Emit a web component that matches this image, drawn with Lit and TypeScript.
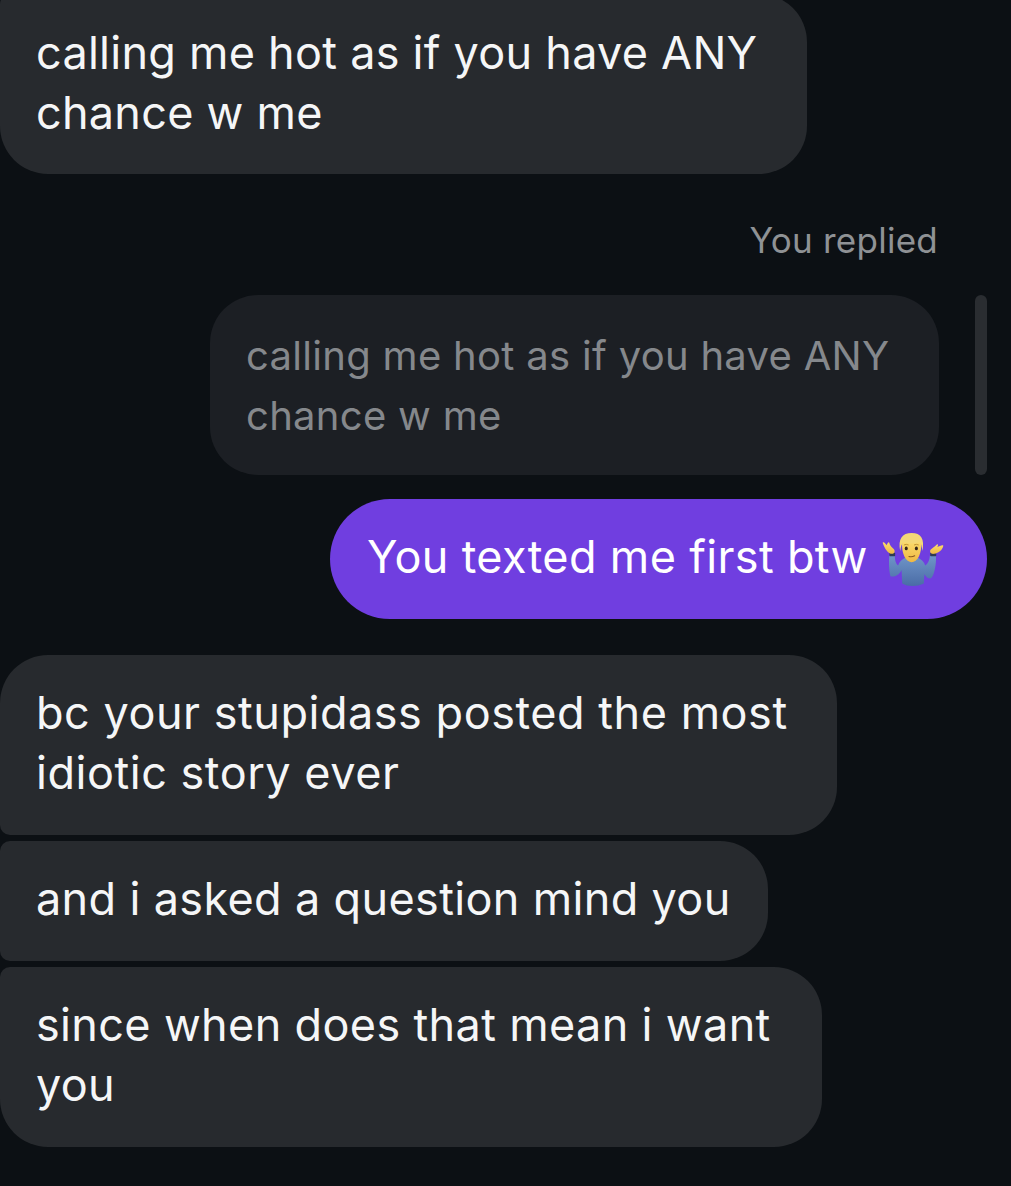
import { LitElement, html, css, svg } from "lit";
import { customElement } from "lit/decorators.js";

const shrug = svg`
  <svg class="emoji" viewBox="70 66 184 162" width="62" height="55" aria-hidden="true">
    <defs>
      <linearGradient id="shirt" x1="0" y1="0" x2="0" y2="1">
        <stop offset="0" stop-color="#6f95c8"/>
        <stop offset="1" stop-color="#4a6ca6"/>
      </linearGradient>
      <linearGradient id="skin" x1="0" y1="0" x2="0" y2="1">
        <stop offset="0" stop-color="#fcdc6c"/>
        <stop offset="1" stop-color="#efb844"/>
      </linearGradient>
    </defs>
    <path d="M92 135 L108 135 C108 145 110 160 118 165 C122 150 135 140 158 138 C180 140 195 150 198 165 C207 160 212 145 212 135 L230 135 C232 160 225 195 215 203 C205 205 198 195 196 190 L194 218 C175 228 145 228 130 218 L128 178 C120 195 105 200 95 197 C90 175 90 150 92 135 Z" fill="url(#shirt)"/>
    <rect x="92" y="127" width="17" height="10" rx="2" fill="#2f3a55"/>
    <rect x="213" y="127" width="18" height="10" rx="2" fill="#2f3a55"/>
    <path d="M72 97 C75 93 80 100 84 105 C86 98 90 93 92 98 C93 103 95 108 104 115 C110 120 108 130 100 130 C88 130 78 115 72 97 Z" fill="url(#skin)"/>
    <path d="M252 106 C250 102 240 108 234 110 C238 104 236 100 232 103 C226 110 218 113 214 118 C210 125 216 132 225 130 C238 128 250 118 252 106 Z" fill="url(#skin)"/>
    <path d="M130 92 C126 130 142 155 158 155 C174 155 190 130 186 92 Z" fill="url(#skin)"/>
    <path d="M124 122 C117 85 130 68 158 68 C186 68 197 85 190 122 C188 107 186 99 181 96 C165 101 150 101 134 96 C129 100 126 108 124 122 Z" fill="#f4d878"/>
    <ellipse cx="142" cy="114" rx="4.5" ry="5.5" fill="#33251a"/>
    <ellipse cx="172" cy="114" rx="4.5" ry="5.5" fill="#33251a"/>
    <path d="M135 104 Q142 100 149 104 M165 104 Q172 100 179 104" stroke="#b6872c" stroke-width="2.5" fill="none"/>
    <path d="M150 138 Q158 141 167 136" stroke="#8a5a20" stroke-width="3" fill="none" stroke-linecap="round"/>
  </svg>
`;

@customElement("app-root")
export class AppRoot extends LitElement {
  static override styles = css`
    :host {
      display: block;
      width: 1011px;
      height: 1186px;
      overflow: hidden;
      background: #0c1014;
      font-family: Inter, "Liberation Sans", sans-serif;
      color: #f5f6f7;
    }

    .thread {
      display: flex;
      flex-direction: column;
      align-items: flex-start;
      margin-top: -6px;
    }

    .bubble {
      box-sizing: border-box;
      padding: 29px 0 31px 36px;
      font-size: 45px;
      letter-spacing: 0.35px;
      line-height: 60px;
      white-space: nowrap;
      background: #272a2e;
      border-radius: 48px;
    }

    .first {
      width: 807px;
      letter-spacing: 0.26px;
      border-top-left-radius: 10px;
    }

    .label {
      align-self: flex-end;
      margin: 44px 73px 0 0;
      font-size: 35px;
      letter-spacing: 0.25px;
      line-height: 44px;
      color: #8f9295;
    }

    .reply {
      align-self: flex-end;
      display: flex;
      gap: 36px;
      margin: 33px 24px 0 0;
    }

    .quoted {
      width: 729px;
      padding: 31px 0 29px 36px;
      background: #1c1f24;
      color: #85888c;
      font-size: 40px;
      letter-spacing: 0.3px;
    }

    .rule {
      width: 12px;
      border-radius: 6px;
      background: #2a2d31;
    }

    .sent {
      align-self: flex-end;
      display: flex;
      align-items: center;
      gap: 14px;
      width: 657px;
      height: 120px;
      margin: 24px 24px 0 0;
      padding: 0 0 0 37px;
      border-radius: 60px;
      background: #703ee0;
      color: #fff;
    }

    .sent span {
      margin-top: -4px;
    }

    .sent .emoji {
      flex: none;
    }

    .group-top {
      width: 837px;
      margin-top: 36px;
      padding: 28px 0 32px 36px;
      letter-spacing: 0.53px;
      border-bottom-left-radius: 10px;
    }

    .group-mid {
      width: 768px;
      margin-top: 6px;
      padding: 28px 0 32px 36px;
      border-top-left-radius: 10px;
      border-bottom-left-radius: 10px;
    }

    .group-end {
      width: 822px;
      margin-top: 6px;
      padding: 28px 0 32px 36px;
      border-top-left-radius: 10px;
    }
  `;

  override render() {
    return html`
      <div class="thread">
        <div class="bubble first">calling me hot as if you have ANY<br />chance w me</div>
        <div class="label">You replied</div>
        <div class="reply">
          <div class="bubble quoted">calling me hot as if you have ANY<br />chance w me</div>
          <div class="rule"></div>
        </div>
        <div class="bubble sent"><span>You texted me first btw</span>${shrug}</div>
        <div class="bubble group-top">bc your stupidass posted the most<br />idiotic story ever</div>
        <div class="bubble group-mid">and i asked a question mind you</div>
        <div class="bubble group-end">since when does that mean i want<br />you</div>
      </div>
    `;
  }
}

declare global {
  interface HTMLElementTagNameMap {
    "app-root": AppRoot;
  }
}
